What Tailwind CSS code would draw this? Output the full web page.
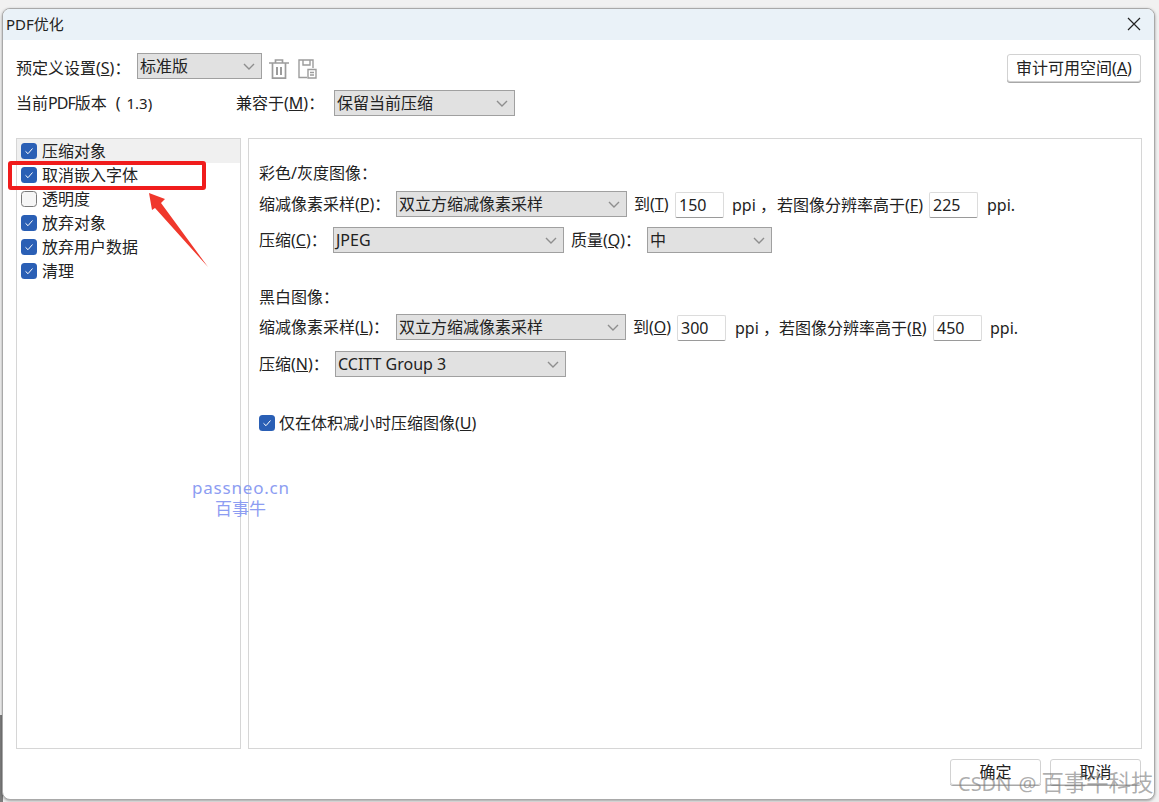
<!DOCTYPE html>
<html lang="zh">
<head>
<meta charset="utf-8">
<script src="https://cdn.jsdelivr.net/npm/@tailwindcss/browser@4"></script>
</head>
<body class="m-0 h-[802px] w-[1159px] overflow-hidden bg-[#f1f1f1] font-['Noto_Sans','Noto_Sans_CJK_SC',sans-serif] text-[16px] leading-[24px] text-[#222]">
<div class="relative h-[802px] w-[1159px] pl-[2px] pt-[8px]">
  <div class="absolute left-0 top-[715px] h-[87px] w-[3px] bg-[#7d7d7d]"></div>
  <div class="relative flex h-[792px] w-[1153px] flex-col overflow-hidden rounded-[8px] border border-[#a9a9a9] bg-white shadow-[0_1px_3px_rgba(0,0,0,0.35)]">
    <!-- title bar -->
    <div class="flex h-[31px] shrink-0 items-center justify-between bg-[#eaf2f8] pb-[2px] pl-[3px] pr-[13px]">
      <span class="text-[15px]">PDF优化</span>
      <svg width="14" height="14" viewBox="0 0 14 14" fill="none" stroke="#222" stroke-width="1.2"><path d="M1 1l12 12M13 1L1 13"/></svg>
    </div>
    <!-- top rows -->
    <div class="flex h-[39px] shrink-0 items-end pl-[13px] pr-[13px]">
      <span class="w-[121px] shrink-0 translate-y-[1px]">预定义设置(<span class="underline">S</span>)：</span>
      <div class="flex h-[26px] w-[125px] shrink-0 items-center justify-between border border-[#a0a0a0] bg-[#e1e1e1] pl-[2px] pr-[6px]"><span>标准版</span>
        <svg width="12" height="7" viewBox="0 0 12 7" fill="none" stroke="#8e8e8e" stroke-width="1.4"><path d="M1 1l5 5 5-5"/></svg></div>
      <svg class="ml-[7px] shrink-0" width="20" height="20" viewBox="0 0 20 20" fill="none" stroke="#9c9c9c" stroke-width="1.7"><path d="M0 4h20M6.500 3.500V1h7v2.500M3.500 4.500V19.200h13V4.500" /><path d="M8 8v8M12 8v8" stroke-width="2"/></svg>
      <svg class="ml-[9px] shrink-0" width="19" height="20" viewBox="0 0 19 20" fill="none" stroke="#9c9c9c" stroke-width="1.4"><path d="M9 18.500H1V1h14v8M5 1v5h7V1M10 10.500h8v8.500h-8z"/><path d="M12 13.500h4M12 16h4" stroke-width="1.6"/></svg>
      <div class="ml-auto flex h-[28px] w-[134px] shrink-0 translate-y-[3px] items-center justify-center rounded-[3px] border border-[#d2d2d2] bg-white shadow-[0_1px_0_#a8a8a8]">审计可用空间(<span class="underline">A</span>)</div>
    </div>
    <div class="flex h-[37px] shrink-0 items-end pl-[13px]">
      <span class="w-[220px] shrink-0 translate-y-[-1px]">当前<span class="tracking-[-1px]">PDF</span>版本<span class="ml-[9px]">(</span><span class="ml-[6px] text-[15px]">1.3)</span></span>
      <span class="w-[98px] shrink-0 translate-y-[-1px]">兼容于(<span class="underline">M</span>)：</span>
      <div class="flex h-[26px] w-[181px] shrink-0 items-center justify-between border border-[#a0a0a0] bg-[#e1e1e1] pl-[2px] pr-[6px]"><span>保留当前压缩</span>
        <svg width="12" height="7" viewBox="0 0 12 7" fill="none" stroke="#8e8e8e" stroke-width="1.4"><path d="M1 1l5 5 5-5"/></svg></div>
    </div>
    <!-- panels -->
    <div class="mt-[22px] flex h-[611px] shrink-0 gap-[7px] pl-[13px]">
      <!-- left list -->
      <div class="w-[225px] shrink-0 border border-[#d6d6d6] bg-white">
        <div class="flex h-[24px] items-center gap-[5px] bg-[#f0f0f0] pl-[4px]"><svg width="16" height="16" viewBox="0 0 16 16"><rect width="16" height="16" rx="3.5" fill="#2a5fb5"/><path d="M4.5 8.3l2.5 2.4L11.5 5.5" fill="none" stroke="#fff" stroke-width="1"/></svg>压缩对象</div>
        <div class="flex h-[24px] items-center gap-[5px] pl-[4px]"><svg width="16" height="16" viewBox="0 0 16 16"><rect width="16" height="16" rx="3.5" fill="#2a5fb5"/><path d="M4.5 8.3l2.5 2.4L11.5 5.5" fill="none" stroke="#fff" stroke-width="1"/></svg>取消嵌入字体</div>
        <div class="flex h-[24px] items-center gap-[5px] pl-[4px]"><svg width="16" height="16" viewBox="0 0 16 16"><rect x="0.5" y="0.5" width="15" height="15" rx="3" fill="#f6f6f6" stroke="#7a7a7a"/></svg>透明度</div>
        <div class="flex h-[24px] items-center gap-[5px] pl-[4px]"><svg width="16" height="16" viewBox="0 0 16 16"><rect width="16" height="16" rx="3.5" fill="#2a5fb5"/><path d="M4.5 8.3l2.5 2.4L11.5 5.5" fill="none" stroke="#fff" stroke-width="1"/></svg>放弃对象</div>
        <div class="flex h-[24px] items-center gap-[5px] pl-[4px]"><svg width="16" height="16" viewBox="0 0 16 16"><rect width="16" height="16" rx="3.5" fill="#2a5fb5"/><path d="M4.5 8.3l2.5 2.4L11.5 5.5" fill="none" stroke="#fff" stroke-width="1"/></svg>放弃用户数据</div>
        <div class="flex h-[24px] items-center gap-[5px] pl-[4px]"><svg width="16" height="16" viewBox="0 0 16 16"><rect width="16" height="16" rx="3.5" fill="#2a5fb5"/><path d="M4.5 8.3l2.5 2.4L11.5 5.5" fill="none" stroke="#fff" stroke-width="1"/></svg>清理</div>
      </div>
      <!-- right panel -->
      <div class="w-[894px] shrink-0 border border-[#d6d6d6] bg-white pl-[10px] pt-[22px]">
        <div class="h-[24px]">彩色/灰度图像：</div>
        <div class="mt-[6px] flex h-[26px] items-center">
          <span class="w-[137px] shrink-0">缩减像素采样(<span class="underline">P</span>)：</span>
          <div class="flex h-[26px] w-[231px] shrink-0 items-center justify-between border border-[#a0a0a0] bg-[#e1e1e1] pl-[2px] pr-[6px]"><span>双立方缩减像素采样</span><svg width="12" height="7" viewBox="0 0 12 7" fill="none" stroke="#8e8e8e" stroke-width="1.4"><path d="M1 1l5 5 5-5"/></svg></div>
          <span class="ml-[7px] w-[41px] shrink-0">到(<span class="underline">T</span>)</span>
          <div class="flex h-[26px] w-[49px] shrink-0 translate-y-[1px] items-center rounded-[2px] border border-[#dcdcdc] border-b-[#9a9a9a] pl-[3px]">150</div>
          <span class="ml-[8px] w-[45px] shrink-0 translate-y-[1px]">ppi ，</span>
          <span class="w-[152px] shrink-0 translate-y-[1px]">若图像分辨率高于(<span class="underline">F</span>)</span>
          <div class="flex h-[26px] w-[49px] shrink-0 translate-y-[1px] items-center rounded-[2px] border border-[#dcdcdc] border-b-[#9a9a9a] pl-[3px]">225</div>
          <span class="ml-[9px] translate-y-[1px]">ppi.</span>
        </div>
        <div class="mt-[10px] flex h-[26px] items-center">
          <span class="w-[74px] shrink-0">压缩(<span class="underline">C</span>)：</span>
          <div class="flex h-[26px] w-[231px] shrink-0 items-center justify-between border border-[#a0a0a0] bg-[#e1e1e1] pl-[2px] pr-[6px]"><span>JPEG</span><svg width="12" height="7" viewBox="0 0 12 7" fill="none" stroke="#8e8e8e" stroke-width="1.4"><path d="M1 1l5 5 5-5"/></svg></div>
          <span class="ml-[7px] w-[76px] shrink-0">质量(<span class="underline">Q</span>)：</span>
          <div class="flex h-[26px] w-[125px] shrink-0 items-center justify-between border border-[#a0a0a0] bg-[#e1e1e1] pl-[2px] pr-[6px]"><span>中</span><svg width="12" height="7" viewBox="0 0 12 7" fill="none" stroke="#8e8e8e" stroke-width="1.4"><path d="M1 1l5 5 5-5"/></svg></div>
        </div>
        <div class="mt-[32px] h-[24px]">黑白图像：</div>
        <div class="mt-[5px] flex h-[26px] items-center">
          <span class="w-[137px] shrink-0">缩减像素采样(<span class="underline">L</span>)：</span>
          <div class="flex h-[26px] w-[230px] shrink-0 items-center justify-between border border-[#a0a0a0] bg-[#e1e1e1] pl-[2px] pr-[6px]"><span>双立方缩减像素采样</span><svg width="12" height="7" viewBox="0 0 12 7" fill="none" stroke="#8e8e8e" stroke-width="1.4"><path d="M1 1l5 5 5-5"/></svg></div>
          <span class="ml-[7px] w-[44px] shrink-0">到(<span class="underline">O</span>)</span>
          <div class="flex h-[26px] w-[49px] shrink-0 translate-y-[1px] items-center rounded-[2px] border border-[#dcdcdc] border-b-[#9a9a9a] pl-[3px]">300</div>
          <span class="ml-[9px] w-[44px] shrink-0 translate-y-[1px]">ppi ，</span>
          <span class="w-[154px] shrink-0 translate-y-[1px]">若图像分辨率高于(<span class="underline">R</span>)</span>
          <div class="flex h-[26px] w-[49px] shrink-0 translate-y-[1px] items-center rounded-[2px] border border-[#dcdcdc] border-b-[#9a9a9a] pl-[3px]">450</div>
          <span class="ml-[8px] translate-y-[1px]">ppi.</span>
        </div>
        <div class="mt-[11px] flex h-[26px] items-center">
          <span class="w-[76px] shrink-0">压缩(<span class="underline">N</span>)：</span>
          <div class="flex h-[26px] w-[231px] shrink-0 items-center justify-between border border-[#a0a0a0] bg-[#e1e1e1] pl-[2px] pr-[6px]"><span>CCITT Group 3</span><svg width="12" height="7" viewBox="0 0 12 7" fill="none" stroke="#8e8e8e" stroke-width="1.4"><path d="M1 1l5 5 5-5"/></svg></div>
        </div>
        <div class="mt-[34px] flex h-[24px] items-center gap-[4px]"><svg width="16" height="16" viewBox="0 0 16 16"><rect width="16" height="16" rx="3.5" fill="#2a5fb5"/><path d="M4.5 8.3l2.5 2.4L11.5 5.5" fill="none" stroke="#fff" stroke-width="1"/></svg><span>仅在体积减小时压缩图像(<span class="underline">U</span>)</span></div>
      </div>
    </div>
    <!-- footer -->
    <div class="mt-[10px] flex justify-end gap-[9px] pr-[13px]">
      <div class="flex h-[26px] w-[91px] items-center justify-center rounded-[3px] border border-[#d2d2d2] shadow-[0_1px_0_#a8a8a8]">确定</div>
      <div class="flex h-[26px] w-[91px] items-center justify-center rounded-[3px] border border-[#d2d2d2] shadow-[0_1px_0_#a8a8a8]">取消</div>
    </div>
  </div>
  <!-- overlays -->
  <div class="absolute left-[8px] top-[161px] h-[29px] w-[198px] rounded-[3px] border-[4px] border-[#f01c1c]"></div>
  <svg class="absolute left-[145px] top-[190px]" width="66" height="80" viewBox="0 0 66 80"><path d="M4 3L20 9L16 13L63 77L10 18L7 20Z" fill="#f0382c"/></svg>
  <div class="absolute left-[192px] top-[477px] text-[17px] leading-[22px] tracking-[0.8px] text-[#8d9df2]">passneo.cn</div>
  <div class="absolute left-[215px] top-[498px] text-[17px] leading-[22px] text-[#8d9df2]">百事牛</div>
  <div class="absolute left-[958px] top-[769px] whitespace-nowrap text-[20px] leading-[28px] text-[#777]/60">CSDN<span class="ml-[7px]">@</span><span class="ml-[5px] text-[22.4px]">百事牛科技</span></div>
</div>
</body>
</html>
